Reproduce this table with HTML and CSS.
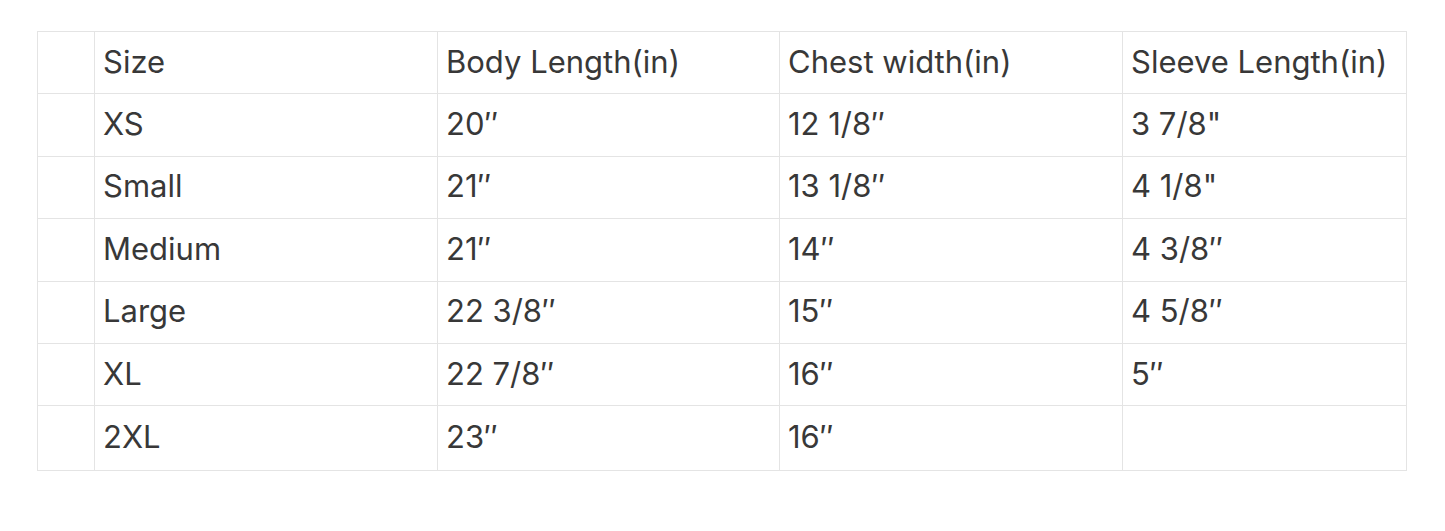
FILE: index.html
```html
<!DOCTYPE html>
<html>
<head>
<meta charset="utf-8">
<link rel="stylesheet" href="styles.css">
</head>
<body>
<div class="page">
<table class="size-table">
  <colgroup>
    <col class="c0"><col class="c1"><col class="c2"><col class="c3"><col class="c4">
  </colgroup>
  <tr><td></td><td>Size</td><td>Body Length(in)</td><td>Chest width(in)</td><td>Sleeve Length(in)</td></tr>
  <tr><td></td><td>XS</td><td>20″</td><td>12 1/8″</td><td>3 7/8"</td></tr>
  <tr><td></td><td>Small</td><td>21″</td><td>13 1/8″</td><td>4 1/8"</td></tr>
  <tr><td></td><td>Medium</td><td>21″</td><td>14″</td><td>4 3/8″</td></tr>
  <tr><td></td><td>Large</td><td>22 3/8″</td><td>15″</td><td>4 5/8″</td></tr>
  <tr><td></td><td>XL</td><td>22 7/8″</td><td>16″</td><td>5″</td></tr>
  <tr class="last"><td></td><td>2XL</td><td>23″</td><td>16″</td><td></td></tr>
</table>
</div>
</body>
</html>
```
FILE: styles.css
```css
html, body {
  margin: 0;
  padding: 0;
  background: #ffffff;
}
.page {
  padding: 31px 0 0 37px;
}
.size-table {
  border-collapse: collapse;
  table-layout: fixed;
  width: 1369px;
  font-family: Inter, "Noto Sans", sans-serif;
  font-size: 31px;
  color: #383838;
}
.c0 { width: 57px; }
.c1 { width: 343px; }
.c2 { width: 342px; }
.c3 { width: 343px; }
.c4 { width: 284px; }
.size-table td {
  border: 1px solid #e4e4e4;
  height: 62.4px;
  padding: 0 0 3px 8px;
  vertical-align: middle;
  box-sizing: border-box;
  white-space: nowrap;
}
.size-table tr.last td {
  height: 65px;
}
```
